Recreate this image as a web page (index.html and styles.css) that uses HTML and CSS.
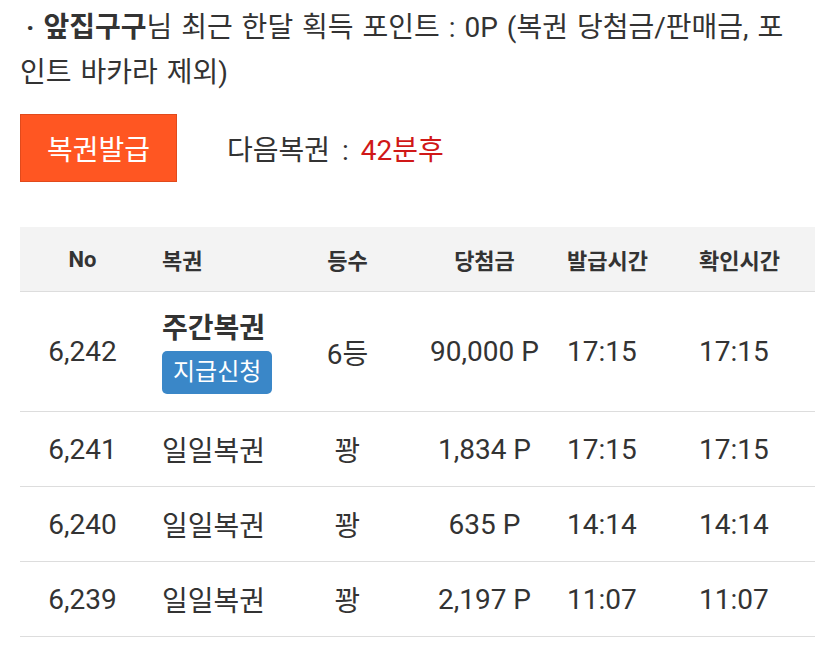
FILE: index.html
```html
<!DOCTYPE html>
<html lang="ko">
<head>
<meta charset="utf-8">
<title>복권</title>
<link rel="stylesheet" href="styles.css">
</head>
<body>
<p class="notice"><b>· 앞집구구</b>님 최근 한달 획득 포인트 : 0P (복권 당첨금/판매금, 포인트 바카라 제외)</p>

<div class="actions">
  <button class="issue-btn">복권발급</button>
  <div class="next">다음복권 : <span class="remain">42분후</span></div>
</div>

<div class="table">
  <div class="row head">
    <div class="c c1">No</div>
    <div class="c c2">복권</div>
    <div class="c c3">등수</div>
    <div class="c c4">당첨금</div>
    <div class="c c5">발급시간</div>
    <div class="c c6">확인시간</div>
  </div>
  <div class="row first">
    <div class="c c1">6,242</div>
    <div class="c c2 stack">
      <span class="ticket-name">주간복권</span>
      <button class="claim-btn">지급신청</button>
    </div>
    <div class="c c3">6등</div>
    <div class="c c4">90,000 P</div>
    <div class="c c5">17:15</div>
    <div class="c c6">17:15</div>
  </div>
  <div class="row">
    <div class="c c1">6,241</div>
    <div class="c c2">일일복권</div>
    <div class="c c3">꽝</div>
    <div class="c c4">1,834 P</div>
    <div class="c c5">17:15</div>
    <div class="c c6">17:15</div>
  </div>
  <div class="row">
    <div class="c c1">6,240</div>
    <div class="c c2">일일복권</div>
    <div class="c c3">꽝</div>
    <div class="c c4">635 P</div>
    <div class="c c5">14:14</div>
    <div class="c c6">14:14</div>
  </div>
  <div class="row">
    <div class="c c1">6,239</div>
    <div class="c c2">일일복권</div>
    <div class="c c3">꽝</div>
    <div class="c c4">2,197 P</div>
    <div class="c c5">11:07</div>
    <div class="c c6">11:07</div>
  </div>
</div>
</body>
</html>
```
FILE: styles.css
```css
* { box-sizing: border-box; }

html, body {
  margin: 0;
  background: #ffffff;
}

body {
  padding: 5px 20px 0 20px;
  font-family: "Roboto", "Noto Sans CJK KR", sans-serif;
  color: #333333;
}

.notice {
  margin: 0;
  width: 780px;
  font-size: 28px;
  line-height: 45px;
  word-spacing: 2px;
  word-break: break-all;
  text-indent: 6px;
}

.notice b {
  font-weight: 700;
}

.actions {
  margin-top: 19px;
  display: flex;
  align-items: center;
  gap: 50px;
}

.issue-btn {
  width: 157px;
  height: 68px;
  background: #ff5622;
  border: 1px solid #e14a1c;
  color: #ffffff;
  font-family: "Roboto", "Noto Sans CJK KR", sans-serif;
  font-size: 28px;
  padding: 0;
}

.next {
  font-size: 28px;
  word-spacing: 5px;
  color: #333333;
}

.remain {
  color: #d01818;
}

.table {
  margin-top: 45px;
  width: 795px;
}

.row {
  display: grid;
  grid-template-columns: 125px 145px 115px 155px 130px 125px;
  align-items: center;
  height: 75px;
  border-bottom: 1px solid #dddddd;
  font-size: 28px;
}

.row.head {
  height: 65px;
  background: #f3f3f3;
  font-size: 22px;
  font-weight: 700;
}

.row.first {
  height: 120px;
}

.c1 { text-align: center; }
.c2 { padding-left: 17px; }
.c3 { text-align: center; }
.c4 { text-align: center; padding-left: 4px; }
.c5 { padding-left: 7px; }
.c6 { padding-left: 9px; }

.stack {
  display: flex;
  flex-direction: column;
  align-items: flex-start;
  gap: 6px;
  padding-top: 4px;
}

.ticket-name {
  font-size: 28px;
  font-weight: 700;
  line-height: 32px;
}

.claim-btn {
  height: 43px;
  line-height: 43px;
  padding: 0 11px;
  background: #3a87c8;
  border: 0;
  border-radius: 5px;
  color: #ffffff;
  font-family: "Roboto", "Noto Sans CJK KR", sans-serif;
  font-size: 24px;
}
```
